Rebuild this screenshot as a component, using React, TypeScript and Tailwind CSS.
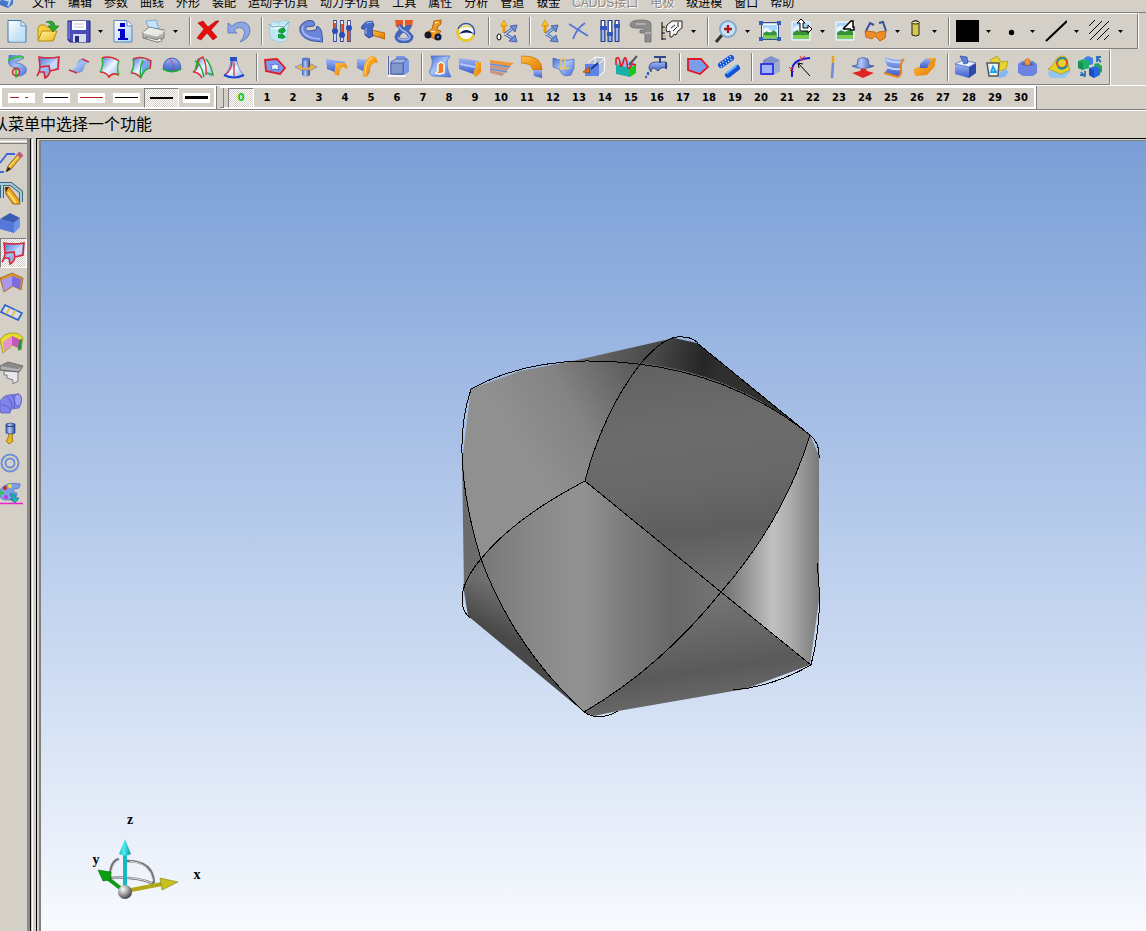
import type { ReactNode } from 'react';

type Tool =
  | { kind: 'icon'; name: string; art: ReactNode; narrow?: boolean }
  | { kind: 'more'; name: string }
  | { kind: 'sep' };

const icon = (name: string, art: ReactNode, narrow = false): Tool => ({ kind: 'icon', name, art, narrow });
const more = (name: string): Tool => ({ kind: 'more', name });
const sep: Tool = { kind: 'sep' };

const menus = [
  '文件', '编辑', '参数', '曲线', '外形', '装配', '运动学仿真', '动力学仿真', '工具',
  '属性', '分析', '管道', '钣金', 'CADDS接口', '电极', '级进模', '窗口', '帮助',
];
const disabledMenus = ['CADDS接口', '电极'];

// gradients shared by all of the icons
function IconDefs() {
  return (
    <svg width="0" height="0" className="absolute" aria-hidden="true">
      <defs>
        <linearGradient id="blue" x1="0" y1="0" x2="1" y2="1">
          <stop offset="0" stopColor="#4068d0" />
          <stop offset=".45" stopColor="#a8c4f4" />
          <stop offset="1" stopColor="#4a70dc" />
        </linearGradient>
        <linearGradient id="blueV" x1="0" y1="0" x2="0" y2="1">
          <stop offset="0" stopColor="#9cb4f4" />
          <stop offset="1" stopColor="#3c5cc8" />
        </linearGradient>
        <linearGradient id="tube" x1="0" y1="0" x2="1" y2="0">
          <stop offset="0" stopColor="#3c5cb8" />
          <stop offset=".4" stopColor="#b4c8f8" />
          <stop offset="1" stopColor="#2c4898" />
        </linearGradient>
        <linearGradient id="pale" x1="0" y1="0" x2="1" y2="1">
          <stop offset="0" stopColor="#3c70e0" />
          <stop offset=".5" stopColor="#eef6ff" />
          <stop offset="1" stopColor="#88b4e8" />
        </linearGradient>
        <linearGradient id="paper" x1="0" y1="0" x2="1" y2="1">
          <stop offset="0" stopColor="#ffffff" />
          <stop offset="1" stopColor="#a9d3f3" />
        </linearGradient>
        <linearGradient id="orange" x1="0" y1="0" x2="1" y2="1">
          <stop offset="0" stopColor="#ffc040" />
          <stop offset="1" stopColor="#e47800" />
        </linearGradient>
        <linearGradient id="yellow" x1="0" y1="0" x2="1" y2="1">
          <stop offset="0" stopColor="#fff49a" />
          <stop offset="1" stopColor="#e6b820" />
        </linearGradient>
        <linearGradient id="gray" x1="0" y1="0" x2="0" y2="1">
          <stop offset="0" stopColor="#f4f4ee" />
          <stop offset="1" stopColor="#8c8c84" />
        </linearGradient>
      </defs>
    </svg>
  );
}

const axesArt = (
  <>
    <path d="M9 14V6" stroke="#e8a000" strokeWidth="3" />
    <path d="M5.500 7L9 1l3.500 6z" fill="#ffc020" stroke="#c88000" strokeWidth=".6" />
    <path d="M10 15l8-6M10 15l8 5" stroke="#4060a8" strokeWidth="3" />
    <path d="M10 15l8-6M10 15l8 5" stroke="#c0d4f8" strokeWidth="1.200" />
    <path d="M15 7l7-1-2 7zM20 16l2 7-8-1z" fill="#7090d8" stroke="#284890" strokeWidth=".7" />
  </>
);

const landscape = (
  <>
    <path d="M3 3h18v18H3z" fill="#a9d4fb" stroke="#fff" />
    <path d="M4 9q4-5 8 0t8-1v4H4z" fill="#e9f5ff" />
    <path d="M4 14l4-3 4 2 5-3 3 3v7H4z" fill="#349434" />
    <path d="M4 16h16v4H4z" fill="#7ccc58" />
  </>
);

const surfaceRed = (
  <>
    <path d="M3 2l20 0-1 12-8 2-5 6-2-5-6 4 3-9z" fill="url(#blue)" />
    <path d="M14 9l7-5v9l-7 3z" fill="#dce8ff" opacity=".7" />
    <path d="M3 2q10 2 20 0l-1 12-8 2-1-5-9 1zM4 12q0 5-3 9l2-4 5 0 1 6q4-2 5-7" fill="none" stroke="#d82838" strokeWidth="1.600" />
  </>
);

const mainTools: Tool[] = [
  icon('New', (
    <>
      <path d="M3 1.500h13l5 5V23H3z" fill="url(#paper)" stroke="#3f78ae" />
      <path d="M16 2v5h5" fill="#d9efff" stroke="#5d9bcf" />
      <path d="M5 23L20 8v15z" fill="#c5e3f9" opacity=".6" />
    </>
  )),
  icon('Open', (
    <>
      <path d="M2 9l2-3h5l2 2h7v13H2z" fill="#f2cf40" stroke="#b88a10" />
      <path d="M6 12h15l-4 10H2z" fill="url(#yellow)" stroke="#b88a10" />
      <path d="M10 3q8-3 9 4h4l-6 6-5-6h3q-1-4-5-4z" fill="#2caa2c" stroke="#107010" strokeWidth=".6" />
    </>
  )),
  icon('Save', (
    <>
      <path d="M1 2h22v21H3l-2-2z" fill="#4a4cb8" stroke="#1c1c80" />
      <path d="M5 2h14v9H5z" fill="#fff" />
      <path d="M7 5h10M7 8h10" stroke="#c0c0d4" />
      <path d="M6 15h13v8H6z" fill="#d4dcec" />
      <path d="M8 17h4v6H8z" fill="#28287c" />
      <path d="M2 3v17" stroke="#8c8cf0" />
    </>
  )),
  more('Save options'),
  icon('Info', (
    <>
      <path d="M3 1.500h13l5 5V23H3z" fill="url(#paper)" stroke="#5a88bc" />
      <path d="M16 2v5h5" fill="#fff" stroke="#5a88bc" />
      <path d="M9 4h5v4H9zM7 10h7v9h3v2H7v-2h2v-7H7z" fill="#0000c8" />
    </>
  )),
  icon('Print', (
    <>
      <path d="M4 2l10-1 3 9H7z" fill="#c4e4fb" stroke="#7ea8cc" />
      <path d="M1 13l6-5 15 3v8l-6 4-15-4z" fill="url(#gray)" stroke="#6c6c64" strokeWidth=".8" />
      <path d="M2 13l6-4 12 3-5 4z" fill="#ecece6" />
      <path d="M1 13l14 4 7-5" stroke="#fff" />
      <path d="M4 18l11 3 3-2 2 3-5 1-10-3z" fill="#fff" stroke="#666" strokeWidth=".7" />
    </>
  )),
  more('Print options'),
  sep,
  icon('Delete', (
    <path d="M2 4l5-2 5 6 8-6h3l-8 9 6 7-4 3-6-7-6 7-4-2 7-9z" fill="#e80c0c" stroke="#a00" strokeWidth=".6" />
  )),
  icon('Undo', (
    <path d="M1 4v10h9l-3-3q6-5 10 0 2 5-4 12 9-3 10-11Q23 3 14 3 9 3 5 7z" fill="#8ca6e4" stroke="#5870b8" strokeWidth=".8" />
  )),
  sep,
  icon('Recycle', (
    <>
      <path d="M1 5l4-3 5 2 5-3 6 2-3 19-7 1-8-3z" fill="#bfe8f6" stroke="#9cc4d8" strokeWidth=".7" />
      <path d="M4 6h15l-4 4H5z" fill="#fff" opacity=".8" />
      <path d="M11 10l5-2 2 4-4 3-4-2zM10 15l5 0 3 3-3 2-5-1z" fill="#18a040" />
      <path d="M1 5l4 3 6-1 5 1 5-5" fill="none" stroke="#5aa0c4" />
    </>
  )),
  icon('Wrench', (
    <>
      <path d="M3 5Q8 0 14 2q3 3 1 5L7 8q-1 4 3 4l7-1 1-4q5 2 5 9l1 7-10-1Q3 20 1 12 0 7 3 5z" fill="#6c84dc" stroke="#28408c" strokeWidth=".8" />
      <path d="M4 7q-3 8 9 12l8 1" stroke="#a8bcf8" strokeWidth="1.500" />
    </>
  )),
  icon('Sliders', (
    <>
      <path d="M5 1v22M12 1v22M19 1v22" stroke="#34448c" strokeWidth="3.600" />
      <path d="M5 2v8M12 2v11M19 2v7" stroke="#e9eefc" strokeWidth="2" />
      <path d="M5 4v6M12 5v8M19 10v12" stroke="#e45428" strokeWidth="2" />
      <path d="M5 13v9M12 18v4" stroke="#c8d4f4" strokeWidth="2" />
      <circle cx="5" cy="12" r="3" fill="#2850b8" /><circle cx="12" cy="16" r="3" fill="#2850b8" />
      <circle cx="19" cy="9" r="3" fill="#2850b8" />
    </>
  )),
  icon('Hammer', (
    <>
      <path d="M10 11l14 3v6l-14-4z" fill="url(#orange)" stroke="#a85400" strokeWidth=".8" />
      <path d="M0 8l5-5 6-1 2 4-2 4 1 7-4 2-4-3V10H1z" fill="#4868c8" stroke="#203880" strokeWidth=".8" />
      <path d="M5 4l6-1M5 9v6" stroke="#a8c0f8" />
    </>
  )),
  icon('Pliers', (
    <>
      <path d="M3 1h8v7H4zM13 1h8l-1 7h-7z" fill="#e85820" />
      <path d="M7 6q2 4 5 5t7 7q-1 4-7 4-6 0-7-4 2-6 7-7t5-5" fill="none" stroke="#4464b8" strokeWidth="5" />
      <path d="M7 7q2 4 5 5t6 6q-1 3-6 3-5 0-6-3" fill="none" stroke="#a0b8f4" strokeWidth="1.500" />
    </>
  )),
  icon('Crane', (
    <>
      <path d="M3 14l6-4 2-8 7-1v4l-3 2-1 4 4 1-3 4-2 5-5-3-5-1z" fill="#f09820" stroke="#a45000" strokeWidth=".8" />
      <path d="M12 4l3-1M8 12l4 1" stroke="#fff" />
      <circle cx="5" cy="16" r="3.500" fill="#181820" /><circle cx="15" cy="18" r="3.500" fill="#101838" />
      <circle cx="15" cy="18" r="1.200" fill="#6080c0" />
    </>
  )),
  icon('View ball', (
    <>
      <circle cx="12" cy="13" r="8.500" fill="#f6f8ff" stroke="#2c4ca0" strokeWidth="1.500" />
      <path d="M4 10a8.500 8.500 0 0016 6" fill="none" stroke="#ecc818" strokeWidth="2.500" />
      <path d="M5 15q7-8 15 0-7-3-15 0z" fill="#101c50" />
      <path d="M6 9q6-4 12 0" stroke="#e8d040" strokeWidth="1.500" fill="none" />
    </>
  )),
  sep,
  icon('Origin axes', (
    <>
      {axesArt}
      <ellipse cx="4" cy="18" rx="2" ry="3" fill="#fff" stroke="#000" />
    </>
  )),
  sep,
  icon('Axes', axesArt),
  icon('Plane', (
    <path d="M2 5l19 12M18 4Q10 9 6 20" fill="none" stroke="#5474d8" strokeWidth="1.800" />
  )),
  icon('Parameters', (
    <>
      <path d="M5 1v22M12 1v22M19 1v22" stroke="#28408c" strokeWidth="5" />
      <path d="M5 2v20M12 2v20M19 2v20" stroke="#9cb4f0" strokeWidth="2.500" />
      <path d="M5 2v5M12 2v11M19 2v4" stroke="#fff" strokeWidth="2" />
      <path d="M2 7h7v4H2zM9 13h6v4H9zM16 5h6v4h-6z" fill="#3458b8" />
    </>
  )),
  icon('Faucet', (
    <>
      <path d="M1 6q0-5 11-5t10 5v17h-6v-9h-5v-3h5q0-2-3-2Q1 10 1 6z" fill="#8c8c8c" stroke="#6c6c6c" strokeWidth=".8" />
      <path d="M7 5h10M16 14h6" stroke="#b8b8b4" strokeWidth="1.500" />
    </>
  )),
  icon('Pick tree', (
    <>
      <path d="M2 3v18M2 8h3M2 14h3M2 20h4" stroke="#000" />
      <path d="M7 6l5-4 10 0v7l-4 3-2 4-2-1-2 3-2 0V12l-3 1-1-3z" fill="#f4f4f4" stroke="#222" />
      <path d="M11 9l4-3M13 12l4-4M18 3v5" stroke="#222" />
      <path d="M3 11h3M3 17h3" stroke="#e09020" />
    </>
  )),
  more('Pick options'),
  sep,
  icon('Zoom', (
    <>
      <path d="M8 16l-6 7" stroke="#333" strokeWidth="3" />
      <circle cx="14" cy="10" r="8" fill="#c4e4fa" stroke="#88a8cc" strokeWidth="2" />
      <path d="M14 6v8M10 10h8" stroke="#b01818" strokeWidth="2.400" />
    </>
  )),
  more('Zoom options'),
  icon('Fit', (
    <>
      <g transform="translate(2 3) scale(.83)">{landscape}</g>
      <path d="M3.500 3.500h17v17h-17z" fill="none" stroke="#2c50a0" />
      <path d="M1 2h4v4H1zM19 2h4v4h-4zM1 18h4v4H1zM19 18h4v4h-4z" fill="#3460b8" />
    </>
  )),
  icon('Pan view', (
    <>
      {landscape}
      <path d="M12 0l4 4h-2v5h5V6l4 4-4 4v-2h-8V4H8z" fill="#fff" stroke="#000" />
    </>
  )),
  more('View options'),
  icon('Rotate view', (
    <>
      {landscape}
      <path d="M10 10L18 2l2 0v6h1v3h-4M10 10h8" fill="#fff" stroke="#000" strokeWidth="1.500" />
    </>
  )),
  icon('Glasses', (
    <>
      <path d="M2 12L6 4l4 2M15 4l4-1 3 9" fill="none" stroke="#3450a0" strokeWidth="2" />
      <path d="M1 12l10 1 1 2 2-2 8-1-1 7-5 3-4-4-1-1-3 3-6-2z" fill="#f08c28" stroke="#b45800" strokeWidth=".8" />
    </>
  )),
  more('Render options'),
  icon('Cylinder', (
    <>
      <path d="M8 3q4-3 7 0v13q-3 2-7 0z" fill="#d4c848" stroke="#222" />
      <ellipse cx="11.500" cy="3.500" rx="3.500" ry="1.500" fill="#f5ef9c" stroke="#222" />
    </>
  ), true),
  more('Shading options'),
  sep,
  icon('Color', <path d="M1 1h23v22H1z" fill="#000" />),
  more('Color options'),
  icon('Point style', <circle cx="12.500" cy="13.500" r="2.700" fill="#000" />),
  more('Point options'),
  icon('Line style', <path d="M3 22L24 2" stroke="#000" strokeWidth="2" />),
  more('Line options'),
  icon('Hatch', (
    <path d="M2 7l6-6M2 15L15 2M3 21L22 2M10 21L22 9M17 21l5-5" stroke="#000" strokeWidth="1" />
  )),
  more('Hatch options'),
];

const shapeTools: Tool[] = [
  icon('Sweep', (
    <>
      <path d="M4 4Q2 9 7 12l6 1q4 1 0 3l-4 0q-3 6 6 5 8-2 6-8-2-4-9-5-4-1 3-3l4-2q-6-6-15-3z" fill="url(#blue)" stroke="#4468b8" strokeWidth=".7" />
      <path d="M3 5l8-3h8" fill="none" stroke="#28c828" strokeWidth="1.500" />
      <circle cx="11" cy="17" r="3.500" fill="#d4d0c8" stroke="#e02020" strokeWidth="1.500" />
      <path d="M11 14v9" stroke="#20b820" strokeWidth="1.500" />
    </>
  )),
  icon('Ruled surface', surfaceRed),
  icon('Strip', (
    <>
      <path d="M2 15q6 0 8-6t6-5l6 3q-4 1-5 6t-7 5z" fill="url(#blue)" />
      <path d="M2 15l8 3M15 4l7 3" stroke="#c83040" strokeWidth="1.500" />
    </>
  )),
  icon('Patch', (
    <>
      <path d="M4 3q8-3 17 3-3 7 0 14-8-4-10 3-4-5-9-6 4-6 2-14z" fill="url(#pale)" />
      <path d="M4 3q8-3 17 3M2 17q6 0 9 5 3-5 10-2" fill="none" stroke="#e02828" strokeWidth="1.500" />
      <path d="M4 3q2 8-2 14M21 6q-3 7 0 14" fill="none" stroke="#28b840" strokeWidth="1.500" />
    </>
  )),
  icon('Net surface', (
    <>
      <path d="M4 4q8-4 18 2 1 5-1 7-6 1-9 10-4-4-10-5 4-6 2-14z" fill="url(#pale)" />
      <path d="M13 7q5-4 9-1v7q-6 1-9 9z" fill="#4c84e8" opacity=".7" />
      <path d="M4 4q8-4 18 2l-1 8M2 18q6 0 10 5" fill="none" stroke="#d03030" strokeWidth="1.500" />
      <path d="M4 4q2 8-2 14M14 5q-4 9-2 17 3-8 9-9" fill="none" stroke="#20b030" strokeWidth="1.500" />
    </>
  )),
  icon('Dome', (
    <>
      <path d="M3 14Q4 3 12 3t9 11q-9 5-18 0z" fill="url(#blueV)" stroke="#4060c0" />
      <path d="M3 14q9 5 18 0" fill="none" stroke="#20a840" strokeWidth="1.800" />
      <path d="M10 4q5 5 4 12" fill="none" stroke="#d04060" />
    </>
  )),
  icon('Blend', (
    <>
      <path d="M2 17Q7 13 7 5l5-3q6 2 9 14l0 6-6-2-4 3-4-6z" fill="url(#pale)" />
      <path d="M2 17q5-2 6-13l4-2q4 8 3 18M2 17q6 0 9 6" fill="none" stroke="#d83030" strokeWidth="1.400" />
      <path d="M4 6q6 2 9 16M7 4l-3 12M15 4q5 6 7 16l-6-2" fill="none" stroke="#28a838" strokeWidth="1.500" />
    </>
  )),
  icon('Revolve', (
    <>
      <path d="M9 6q-1 9-7 14 10 5 20 0-6-5-7-14z" fill="url(#pale)" stroke="#5078d8" strokeWidth=".7" />
      <path d="M8 2h7v4H8z" fill="#2450c8" />
      <path d="M10 6q0 9-7 14M12 8v13" fill="none" stroke="#d03040" strokeWidth="1.300" />
      <path d="M2 20q10 5 20 0" fill="none" stroke="#1c40d8" strokeWidth="2" />
    </>
  )),
  sep,
  icon('Trim plane', (
    <>
      <path d="M2 5l12-1 8 9-5 6-14-3z" fill="#7c9cec" stroke="#e01828" strokeWidth="1.800" />
      <path d="M7 10l3 0 2-1 4 1-1 2 1 3-4-1-4 1 1-3z" fill="#f0f4ff" stroke="#3858b8" strokeWidth=".7" />
    </>
  )),
  icon('Extrude', (
    <>
      <path d="M8 12h8v8q-4 3-8 0z" fill="url(#tube)" />
      <path d="M1 12l7-3h9l6 3-6 3H7z" fill="#f0b040" stroke="#7888b0" strokeWidth=".8" />
      <path d="M8 4q4-2 8 0v8q-4 2-8 0z" fill="url(#tube)" />
      <ellipse cx="12" cy="4" rx="4" ry="1.500" fill="#5878d0" />
    </>
  )),
  icon('Trim strip', (
    <>
      <path d="M1 4l20 3-6 5-3 6L2 14z" fill="url(#blueV)" />
      <path d="M10 8h10q3 2 2 6l-3-2q-4-1-5 9l-5-2q2-8 1-11z" fill="url(#orange)" />
    </>
  )),
  icon('Offset strip', (
    <>
      <path d="M1 4l15 1-3 14-12-6z" fill="url(#blueV)" />
      <path d="M7 22Q7 2 17 1q4 1 5 7-8-2-10 13z" fill="url(#orange)" />
      <path d="M9 20Q9 4 17 3" stroke="#ffe080" />
    </>
  )),
  icon('Box', (
    <>
      <path d="M1.500 2v19h17" fill="none" stroke="#fff" strokeWidth="1.500" />
      <path d="M1.500 1v19" stroke="#5068a8" />
      <path d="M9 1l8 0 5 4v12l-5 3H9z" fill="#7c98e4" />
      <path d="M4 7l5-3h11l-4 4v11H4z" fill="#a4b4dc" stroke="#4058a0" strokeWidth=".8" />
      <path d="M4 8h12v11H4z" fill="#8098cc" stroke="#3858a8" strokeWidth=".8" />
    </>
  )),
  sep,
  icon('Emboss', (
    <>
      <path d="M4 1h18q-4 4-3 10t4 11l-18-1q-5-2-3-6 4-7 1-14z" fill="url(#blue)" stroke="#4468c8" strokeWidth=".7" />
      <path d="M8 18l2-2V9l3-2 3 2v9l-5 1z" fill="#f07820" stroke="#fff" strokeWidth="1.400" />
    </>
  )),
  icon('Round edge', (
    <>
      <path d="M0 3l20 3-3 14L0 14z" fill="url(#blueV)" />
      <path d="M16 7l6 0v10l-5 5q-3-2-2-6 2-3 1-9z" fill="url(#orange)" />
      <path d="M1 9l15 3" stroke="#b4c8fc" strokeWidth="2" />
    </>
  )),
  icon('Sheet stack', (
    <>
      <path d="M0 5l24 3-5 4L0 8z" fill="#ee9838" />
      <path d="M0 10l19 3-2 3-17-3zM0 15l15 3-3 3-12-3z" fill="#c8947c" />
      <path d="M0 9l20 3M0 14l17 3" stroke="#6488d8" strokeWidth="1.500" />
    </>
  )),
  icon('Bend', (
    <>
      <path d="M0 1q21-1 21 14l-9 0Q11 8 0 8z" fill="url(#orange)" stroke="#c06c00" strokeWidth=".7" />
      <path d="M12 15h9v8l-8-2z" fill="url(#blueV)" />
    </>
  )),
  icon('Flange', (
    <>
      <path d="M1 3q10 4 21 1v9l-3 7q-6 2-9-1l-3-5-6-2z" fill="url(#blue)" stroke="#4868c0" strokeWidth=".7" />
      <path d="M9 4h4v8l-4 2zM9 14l9-1" fill="none" stroke="#e8c860" strokeWidth="1.500" />
    </>
  )),
  icon('Cut cube', (
    <>
      <path d="M2 9h14v12H2z" fill="#5c84e8" />
      <path d="M9 5l12-3v14l-5 4V9L4 9z" fill="#a8b8dc" opacity=".7" />
      <path d="M5 8l7-6 10 1-1 14-5 4M12 2v7M16 9l6-6" fill="none" stroke="#fff" />
      <path d="M8 14l7-6" stroke="#1c3890" strokeWidth="2" />
      <path d="M0 17l6-5 1 6z" fill="#e07018" stroke="#903c00" strokeWidth=".7" />
    </>
  )),
  icon('Deform', (
    <>
      <path d="M2 9l14 4v9L2 19z" fill="#18b0a8" /><path d="M16 13l6-4v9l-6 4z" fill="#18c818" />
      <path d="M2 9l7-5 13 4-6 5z" fill="#9cb8f4" />
      <path d="M2 10V4q3-4 4 4t4-4q2-4 3 5t5 0l4 1" fill="none" stroke="#e01c1c" strokeWidth="1.600" />
      <path d="M15 10l8-9" stroke="#555" strokeWidth="2" />
    </>
  )),
  icon('Tap', (
    <>
      <path d="M4 13q0-6 7-6h10l1 5-6 1-3 3-4-3q-3 0-3 4z" fill="url(#blueV)" stroke="#283c74" strokeWidth=".8" />
      <path d="M9 2h12M15 2v6M21 7v7" stroke="#304888" strokeWidth="2" />
      <path d="M3 18v1M1 22v0" stroke="#3c60c8" strokeWidth="2.500" strokeLinecap="round" />
    </>
  )),
  sep,
  icon('Closed plane', (
    <path d="M2 4l13 0 7 8-8 7-12-4z" fill="#7c9cec" stroke="#e01828" strokeWidth="1.800" />
  )),
  icon('Pipes', (
    <>
      <path d="M4 10l10-7M11 20l9-7" stroke="#1454d8" strokeWidth="6" strokeLinecap="round" />
      <path d="M10 18l9-7" stroke="#68b4ff" strokeWidth="2" strokeLinecap="round" />
      <path d="M3 9l11-8M4 12l12-9" stroke="#fff" strokeWidth="1.500" strokeDasharray="1 2" />
    </>
  )),
  sep,
  icon('Block', (
    <>
      <path d="M5 5l8-4 9 4v11l-7 4H5z" fill="#8090c8" />
      <path d="M15 9l7-4v11l-7 4z" fill="#a0acd8" />
      <path d="M3 9h12v10H3z" fill="#9cb4f4" stroke="#1818e0" strokeWidth="1.500" />
    </>
  )),
  icon('Fillet', (
    <>
      <path d="M3 22v-6Q3 4 21 3" fill="none" stroke="#1818d8" strokeWidth="2" />
      <path d="M10 9l11 12M9 8l1 5m-1-5l5 1" stroke="#000" fill="none" />
      <path d="M0 12l5 5m0-6l-4 5M11 1l3 5m2-5l-5 4" stroke="#e03040" />
    </>
  )),
  icon('Pin', (
    <>
      <path d="M13 1v7" stroke="#e4a820" strokeWidth="2.500" />
      <path d="M13 8l-1 15" stroke="#6c88e0" strokeWidth="2.500" />
    </>
  )),
  icon('Draft', (
    <>
      <path d="M7 4q5-3 10 0l1 6 5 1q-11 5-22 0l5-1z" fill="url(#tube)" stroke="#3858a0" strokeWidth=".7" />
      <path d="M10 14h5l1 2 7 2-11 5-11-5 8-2z" fill="#e02424" />
    </>
  )),
  icon('Wave sheet', (
    <>
      <path d="M3 2q9 4 19 2-4 4-3 10t-3 8L2 18q5-4 3-8t-2-8z" fill="url(#blueV)" />
      <path d="M4 5q8 3 15 2M5 12q7 3 13 2" stroke="#c4d8ff" strokeWidth="2" />
      <path d="M22 4q-4 4-3 10t-3 8M2 18l14 4" fill="none" stroke="#e88420" strokeWidth="2" />
    </>
  )),
  icon('Slab', (
    <>
      <path d="M1 14l6-3h8l7-6v6l-8 9-11 1-2-3z" fill="url(#orange)" />
      <path d="M13 3h9q2 2 0 4l-5 3-6-1z" fill="url(#orange)" />
      <path d="M7 9l6-6 5 2-4 8-7 0z" fill="url(#blueV)" />
    </>
  )),
  sep,
  icon('Mold', (
    <>
      <path d="M1 9l14 3v11L1 19z" fill="url(#blueV)" /><path d="M15 12l7-4v10l-7 5z" fill="#3048a8" />
      <path d="M1 9l8-4 13 3-7 4z" fill="#e8f2ff" stroke="#5068b8" strokeWidth=".8" />
      <path d="M6 1l7 1 1 6-4 1z" fill="#5480dc" stroke="#304c98" strokeWidth=".7" />
    </>
  )),
  icon('Cavity', (
    <>
      <path d="M5 5l7-4 4 6 7-1-2 8-7 2z" fill="#e8d430" stroke="#a89410" strokeWidth=".7" />
      <path d="M13 19l7-5 4 3-4 5-6 1z" fill="#88b8f0" />
      <path d="M2 8h12l-1 13H4z" fill="#e6f2ee" stroke="#555" strokeWidth="1.500" />
      <path d="M6 17l2-5 3 5z" fill="none" stroke="#20a0e8" strokeWidth="2" />
    </>
  )),
  icon('Core', (
    <>
      <path d="M2 9l4-3h11l4 3v9l-4 3H7l-5-3z" fill="#6c84e0" />
      <path d="M5 9q7-3 13 0-6 4-13 0z" fill="#4058b8" />
      <path d="M9 10V5q3-3 5 0v5z" fill="#f09830" stroke="#c86c10" strokeWidth=".7" />
    </>
  )),
  icon('Machining', (
    <>
      <path d="M0 17l12-5 12 4-6 7H4z" fill="#94c4f4" />
      <path d="M1 14l6-5q2-8 9-8 5 1 5 8l2 6-9 4z" fill="#e4d028" stroke="#a89418" strokeWidth=".7" />
      <circle cx="15" cy="8" r="5" fill="none" stroke="#e04828" strokeWidth="2" />
      <path d="M10 7q3-6 9-3M11 12q4 4 9-1" fill="none" stroke="#1c90a8" strokeWidth="2" />
    </>
  )),
  icon('Swap blocks', (
    <>
      <path d="M6 3l4-2 5 2v6l-6 2z" fill="#3c80e8" />
      <path d="M0 6l5-2 6 2v7l-6 2-5-2z" fill="#20b068" /><path d="M0 6l5 2v7l-5-2z" fill="#18905c" />
      <path d="M16 9l4-1 4 3v6l-4 2z" fill="#20a858" />
      <path d="M11 13l6-2 5 2v7l-6 3-5-3z" fill="#2868e0" /><path d="M11 13l5 2v8l-5-3z" fill="#1c50c0" />
      <path d="M23 7l-4-4m0 4V2h4M3 17l4 5m-5-2h5v-4" fill="none" stroke="#2870b0" strokeWidth="1.800" />
    </>
  )),
];

const sideTools: { name: string; art: ReactNode }[] = [
  { name: 'Sketch', art: (
    <>
      <path d="M0 12L7 3h8M0 21h4" fill="none" stroke="#3868e0" strokeWidth="1.800" />
      <path d="M6 21l2-6L18 3l3 3L11 18z" fill="#f0b428" stroke="#805010" strokeWidth=".8" /><path d="M9 16L19 5" stroke="#fff0a0" />
      <path d="M18 2l4 4" stroke="#c05880" strokeWidth="4" />
      <path d="M6 21l2-5 3 2z" fill="#222" />
    </>
  ) },
  { name: 'Edit sketch', art: (
    <>
      <path d="M0 3h11l10 8v10M2 3v14" fill="none" stroke="#3c6880" strokeWidth="4" />
      <path d="M0 3h11l10 8v10M2 3v14" fill="none" stroke="#a8ccdc" strokeWidth="2" />
      <path d="M5 7l4-1 10 13 1 4h-7L6 13z" fill="#f0a820" stroke="#805010" strokeWidth=".8" /><path d="M8 11l8 11" stroke="#ffe070" strokeWidth="2" />
      <path d="M5 6l4 0-3 5z" fill="#443010" />
    </>
  ) },
  { name: 'Solid', art: (
    <>
      <path d="M0 8l10-6 10 5-6 5z" fill="#3c5cb4" /><path d="M0 8l14 4v10L0 18z" fill="#5478d8" />
      <path d="M14 12l6-5v9l-6 6z" fill="#6c94e8" />
    </>
  ) },
  { name: 'Surface', art: surfaceRed },
  { name: 'Shell', art: (
    <>
      <path d="M0 7l12-5 11 5-2 12-8-4-9 6z" fill="#d8942c" stroke="#906018" strokeWidth=".7" />
      <path d="M2 9l10-4v10l-8 5z" fill="#a898f4" /><path d="M12 5l9 3-1 10-8-3z" fill="#7c6ce0" />
    </>
  ) },
  { name: 'Datum plane', art: (
    <>
      <path d="M5 4l17 8-4 7L1 11z" fill="#d8dce8" stroke="#2860c8" strokeWidth="1.600" /><path d="M6 13l4-6M12 15l4-6" stroke="#e8b830" strokeWidth="1.400" />
    </>
  ) },
  { name: 'Section', art: (
    <>
      <path d="M0 9Q4 2 12 2t11 5l-2 12-8-5-10 8z" fill="#e4dc28" stroke="#908818" strokeWidth=".7" />
      <path d="M3 11l9-6v9l-8 6z" fill="#e490d8" /><path d="M12 5l7 3v9l-7-3z" fill="#c458b8" />
      <path d="M19 9l3-1-1 10-3 2z" fill="#209048" />
    </>
  ) },
  { name: 'Sheet metal', art: (
    <>
      <path d="M4 10h14v10l-5 3v-4l-6-2v-3H4z" fill="#e8e8ec" stroke="#666" strokeWidth=".8" />
      <path d="M0 5l8-4 15 4-4 6L0 9z" fill="#b0b0b0" stroke="#444" strokeWidth=".8" /><path d="M0 5l8-4 15 4-5 3z" fill="#888" />
    </>
  ) },
  { name: 'Pipe', art: (
    <>
      <path d="M0 19V11q2-6 9-7l10-1q5 5 0 14l-8 1-1 4-9 0z" fill="#8084e8" stroke="#5050b8" strokeWidth=".7" />
      <ellipse cx="18" cy="9" rx="3.500" ry="6" fill="#9ca0f8" stroke="#5858c0" strokeWidth=".8" />
      <path d="M2 14q6 0 9 6M7 6q5 3 5 11M12 4q4 5 2 13" stroke="#5860c8" fill="none" />
    </>
  ) },
  { name: 'Piston', art: (
    <>
      <path d="M9 12h4l-1 4 1 4-4 3-3-3 2-3z" fill="#e8b820" stroke="#906810" strokeWidth=".8" />
      <path d="M6 3q4-2 9 0v9q-5 2-9 0z" fill="url(#tube)" stroke="#28407c" strokeWidth=".7" /><path d="M6 5q4 1 9 0" stroke="#203870" />
    </>
  ) },
  { name: 'Bearing', art: (
    <>
      <circle cx="10" cy="12" r="8.500" fill="none" stroke="#6c90dc" strokeWidth="2" /><circle cx="10" cy="12" r="4.500" fill="none" stroke="#6c90dc" strokeWidth="2" />
      <circle cx="10" cy="12" r="6.500" fill="none" stroke="#f0d878" strokeDasharray="2 4" />
    </>
  ) },
  { name: 'Render', art: (
    <>
      <path d="M0 9Q6 0 20 3q1 5-6 5-2 3 3 4 0 7-10 7Q0 19 0 14z" fill="#7ca0e8" stroke="#4c6cb8" strokeWidth=".7" />
      <circle cx="5" cy="7" r="2" fill="#d02020" /><circle cx="10" cy="5" r="2" fill="#f0e030" /><circle cx="2" cy="12" r="2" fill="#30d040" />
      <circle cx="6" cy="16" r="2" fill="#d030d0" /><path d="M10 13q6-1 6 4h3l-4 5-5-4h3z" fill="#28b0c0" stroke="#0c6878" strokeWidth=".7" />
      <path d="M0 22.500h23" stroke="#e820d0" strokeWidth="1.500" />
    </>
  ) },
];

const lineTypes = [
  { name: 'Center line', color: '#b02020', width: 1, dash: '9 6 3 9' },
  { name: 'Thin line', color: '#000', width: 1 },
  { name: 'Red line', color: '#b02020', width: 1 },
  { name: 'Long line', color: '#000', width: 1 },
  { name: 'Medium line', color: '#000', width: 2 },
  { name: 'Thick line', color: '#000', width: 3 },
];
const activeLine = 4;
const layers = Array.from({ length: 31 }, (_, i) => i);

const pressed =
  'border border-t-[#808080] border-l-[#808080] border-r-white border-b-white bg-[repeating-conic-gradient(#ffffff_0_25%,#d4d0c8_0_50%)] bg-[length:2px_2px]';

function Glyph({ children }: { children: ReactNode }) {
  return (
    <svg width="24" height="24" viewBox="0 0 24 24" fill="none" className="shrink-0">
      {children}
    </svg>
  );
}

function Toolbar({ tools, label }: { tools: Tool[]; label: string }) {
  return (
    <div
      role="toolbar"
      aria-label={label}
      className={`flex h-9 w-max items-center border-y border-r border-t-white border-r-[#808080] border-b-[#808080] pl-px shadow-[1px_0_0_#ffffff] ${
        tools === mainTools ? 'pr-2.5' : 'pr-1'
      }`}
    >
      {tools.map((tool, i) => {
        if (tool.kind === 'sep') {
          return (
            <div key={i} className="flex w-[10px] justify-end pr-px">
              <div className="h-7 w-0.5 border-l border-l-[#808080] bg-white" />
            </div>
          );
        }
        if (tool.kind === 'more') {
          return (
            <button key={i} aria-label={tool.name} className="flex h-8 w-[13px] items-center justify-center">
              <svg width="5" height="3" viewBox="0 0 5 3"><path d="M0 0h5L2.500 3z" fill="#000" /></svg>
            </button>
          );
        }
        return (
          <button
            key={i}
            aria-label={tool.name}
            className={tool.narrow ? 'flex h-8 w-6 items-center justify-center' : 'flex h-8 w-[31px] items-center justify-end pr-[3px]'}
          >
            <Glyph>{tool.art}</Glyph>
          </button>
        );
      })}
    </div>
  );
}

function LayerBar() {
  return (
    <div className="flex h-[25px] w-full border-y border-t-white border-b-[#808080]">
      <div className="flex items-center border-2 border-white pl-0.5 shadow-[1px_0_0_#808080]">
        {lineTypes.map((line, i) => (
          <button
            key={line.name}
            aria-label={line.name}
            className={`flex h-5 w-[35px] items-center justify-center ${i === activeLine ? pressed : ''}`}
          >
            <svg width="27" height="10" className={i === activeLine ? '' : 'bg-white'}>
              <path
                d={line.width === 2 ? 'M2 5h23' : 'M2 4.500h23'}
                stroke={line.color}
                strokeWidth={line.width}
                strokeDasharray={line.dash}
              />
            </svg>
          </button>
        ))}
      </div>
      <div className="ml-1 flex items-center border-2 border-l-0 border-white shadow-[1px_0_0_#808080]">
        <div className="mr-1 h-5 w-1 border-r border-b border-[#808080]" />
        {layers.map((layer) => (
          <button
            key={layer}
            className={`flex h-5 w-[26px] items-center justify-center font-['DejaVu_Sans'] text-[10px] font-bold ${
              layer === 0 ? `${pressed} text-[#10c810]` : 'text-black'
            }`}
          >
            {layer}
          </button>
        ))}
      </div>
    </div>
  );
}

function Model() {
  return (
    <g strokeLinejoin="round">
      <defs>
        <linearGradient id="f1" gradientUnits="userSpaceOnUse" x1="520" y1="440" x2="640" y2="365">
          <stop offset="0" stopColor="#909090" /><stop offset=".45" stopColor="#838383" /><stop offset="1" stopColor="#585858" />
        </linearGradient>
        <linearGradient id="f2" gradientUnits="userSpaceOnUse" x1="660" y1="365" x2="690" y2="590">
          <stop offset="0" stopColor="#626262" /><stop offset=".3" stopColor="#6c6c6c" /><stop offset=".55" stopColor="#686868" />
          <stop offset=".75" stopColor="#5e5e5e" /><stop offset="1" stopColor="#727272" />
        </linearGradient>
        <linearGradient id="f3" gradientUnits="userSpaceOnUse" x1="481" y1="0" x2="721" y2="0">
          <stop offset="0" stopColor="#787878" /><stop offset=".25" stopColor="#8a8a8a" /><stop offset=".42" stopColor="#929292" />
          <stop offset=".6" stopColor="#7c7c7c" /><stop offset=".8" stopColor="#686868" /><stop offset="1" stopColor="#747474" />
        </linearGradient>
        <linearGradient id="f4" gradientUnits="userSpaceOnUse" x1="700" y1="600" x2="715" y2="700">
          <stop offset="0" stopColor="#747474" /><stop offset=".7" stopColor="#5a5a5a" /><stop offset="1" stopColor="#686868" />
        </linearGradient>
        <linearGradient id="f5" gradientUnits="userSpaceOnUse" x1="725" y1="0" x2="820" y2="0">
          <stop offset="0" stopColor="#747474" /><stop offset=".5" stopColor="#c0c0c0" /><stop offset=".68" stopColor="#adadad" />
          <stop offset="1" stopColor="#777777" />
        </linearGradient>
        <linearGradient id="f6" gradientUnits="userSpaceOnUse" x1="585" y1="365" x2="720" y2="385">
          <stop offset="0" stopColor="#686868" /><stop offset=".5" stopColor="#484848" /><stop offset=".85" stopColor="#262626" />
          <stop offset="1" stopColor="#303030" />
        </linearGradient>
        <linearGradient id="f7" gradientUnits="userSpaceOnUse" x1="495" y1="585" x2="475" y2="622">
          <stop offset="0" stopColor="#707070" /><stop offset="1" stopColor="#484848" />
        </linearGradient>
      </defs>
      <path d="M573 361L674 338L697 343L810 435L730 392L641 370Z" fill="url(#f6)" />
      <path d="M463 585L468 616L584 712L530 640L481 550Z" fill="url(#f7)" />
      <path d="M462 455L464 590L485 562L475 520Z" fill="#6c6c6c" />
      <path d="M721 592L765 530L789 485L810 435L819 456L819 600L810 665Z" fill="url(#f5)" />
      <path d="M721 592L810 665L745 689L618 711L594 716L584 712L640 665Z" fill="url(#f4)" />
      <path d="M471 389L520 371L573 361Q606 360 641 363Q603 412 585 481Q514 518 481 559Q463 500 463 453Z" fill="url(#f1)" />
      <path d="M641 363Q736 374 810 435Q784 520 721 592L585 481Q603 412 641 363Z" fill="url(#f2)" />
      <path d="M585 481L721 592Q661 667 584 712Q513 646 481 559Q514 518 585 481Z" fill="url(#f3)" />
      <g fill="none" stroke="#000" strokeWidth="1" shapeRendering="crispEdges">
        <path d="M471 389Q520 362 585 361Q716 360 810 435" />
        <path d="M471 389Q461 420 462 453Q463 500 481 559Q513 646 584 712" />
        <path d="M585 481Q603 412 641 363Q666 334 683 337Q692 337 698 343" />
        <path d="M585 481Q514 518 481 559Q462 581 462 600Q462 611 470 618" />
        <path d="M585 481L721 592L811 665" />
        <path d="M810 435Q784 520 721 592Q661 667 584 712" />
        <path d="M697 343L810 435Q820 443 819 458" />
        <path d="M817 563Q824 615 811 665Q772 687 733 690" />
        <path d="M584 712Q599 722 618 711" />
      </g>
    </g>
  );
}

function AxisTriad() {
  return (
    <g>
      <defs>
        <radialGradient id="ball" cx=".35" cy=".3" r=".7">
          <stop offset="0" stopColor="#fff" /><stop offset=".5" stopColor="#a8a8a8" /><stop offset="1" stopColor="#484848" />
        </radialGradient>
        <linearGradient id="cone"><stop offset="0" stopColor="#20b8c0" /><stop offset=".4" stopColor="#48f0f4" /><stop offset="1" stopColor="#109098" /></linearGradient>
      </defs>
      <path d="M110 878Q110 861 119 859M127 861Q153 861 154 883M110 878Q135 876 154 884" fill="none" stroke="#78787c" strokeWidth="2.500" />
      <path d="M112 878Q135 876 152 883M111 876q1-13 8-16M130 861q20 2 23 20" fill="none" stroke="#d8d8dc" />
      <path d="M124 891L106 877" stroke="#109818" strokeWidth="4" />
      <path d="M98 870l13 2-1 8-7 1z" fill="#08a010" stroke="#087010" strokeWidth=".6" />
      <path d="M126 891L162 884" stroke="#b0a818" strokeWidth="4" />
      <path d="M160 878l18 4-16 8z" fill="#c8c020" stroke="#888010" strokeWidth=".6" />
      <path d="M125 890V853" stroke="#18b8c4" strokeWidth="4" />
      <path d="M119 854l6-15 6 15q-6 3-12 0z" fill="url(#cone)" />
      <circle cx="125" cy="892" r="7" fill="url(#ball)" />
      <g className="font-['Liberation_Serif'] text-[14px] font-bold" fill="#000" textAnchor="middle">
        <text x="130" y="824">z</text>
        <text x="96" y="864">y</text>
        <text x="197" y="879">x</text>
      </g>
    </g>
  );
}

export default function App() {
  return (
    <div className="flex h-screen min-w-0 flex-col overflow-hidden bg-[#d4d0c8] font-['Liberation_Sans','Noto_Sans_CJK_SC',sans-serif] text-black">
      <IconDefs />
      <nav className="flex h-[13px] shrink-0 items-end gap-3 border-b border-[#808080] pb-[3px]">
        <svg width="20" height="12" viewBox="0 0 20 12" className="shrink-0">
          <path d="M0 4l5-4 8 2v5l-5 4-8-3z" fill="#4474cc" />
          <path d="M3 2l7 2-2 5" fill="none" stroke="#bcd4f8" strokeWidth="2" />
        </svg>
        {menus.map((menu) => (
          <button
            key={menu}
            disabled={disabledMenus.includes(menu)}
            className="shrink-0 whitespace-nowrap text-xs leading-3 disabled:text-[#8c8880] disabled:[text-shadow:1px_1px_0_#ffffff]"
          >
            {menu}
          </button>
        ))}
      </nav>
      <div className="shrink-0">
        <Toolbar tools={mainTools} label="Main" />
        <Toolbar tools={shapeTools} label="Shape" />
        <LayerBar />
      </div>
      <p className="-ml-2 h-7 shrink-0 whitespace-nowrap border-t border-white text-base leading-7">从菜单中选择一个功能</p>

      <div className="flex min-h-0 flex-1">
        <aside className="flex w-[33px] shrink-0 border-t border-r border-t-[#808080] border-r-white pr-px">
          <div className="flex flex-1 border-r border-black">
            <div className="flex flex-1 flex-col border-r-[3px] border-[#8c8a84]">
              <div className="mt-0.5 mb-1 h-[3px] shrink-0 border-y border-t-white border-b-[#808080]" />
              {sideTools.map((tool) => (
                <button
                  key={tool.name}
                  aria-label={tool.name}
                  className={`flex h-[30px] w-full shrink-0 items-center ${tool.name === 'Surface' ? pressed : ''}`}
                >
                  <Glyph>{tool.art}</Glyph>
                </button>
              ))}
            </div>
          </div>
        </aside>
        <main className="ml-[3px] min-w-0 flex-1 border-t border-l border-black pt-px pl-0.5">
          <div className="h-full border-t border-l-2 border-[#808080]">
            <div className="relative h-full bg-linear-to-b from-[#7a9ed6] to-[#f8fafe]">
              <svg className="absolute inset-0 h-full w-full">
                <g transform="translate(-41 -141)">
                  <Model />
                  <AxisTriad />
                </g>
              </svg>
            </div>
          </div>
        </main>
      </div>
    </div>
  );
}
